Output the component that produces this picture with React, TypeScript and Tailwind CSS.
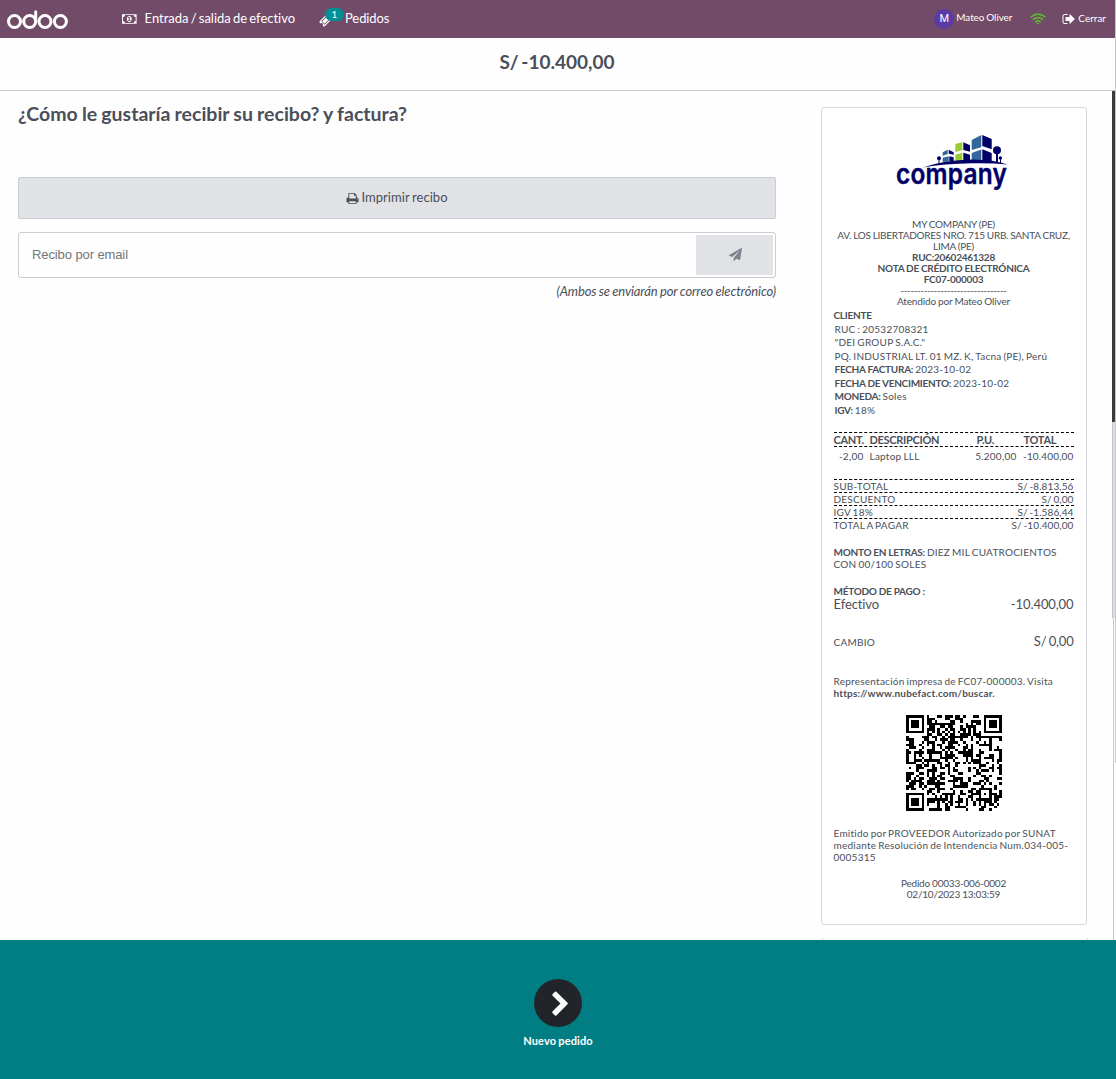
import React from "react";

const MONEY = "M768 1152h384v-96h-128v-448h-114l-148 137 77 80q42-37 55-57h2v288h-128v96zm512-256q0 70-21 142t-59.5 134-101.5 101-138 39-138-39-101.5-101-59.5-134-21-142 21-142 59.5-134 101.5-101 138-39 138 39 101.5 101 59.5 134 21 142zm512 256v-512q-106 0-181-75t-75-181h-1152q0 106-75 181t-181 75v512q106 0 181 75t75 181h1152q0-106 75-181t181-75zm128-832v1152q0 26-19 45t-45 19h-1792q-26 0-45-19t-19-45v-1152q0-26 19-45t45-19h1792q26 0 45 19t19 45z";
const TICKET = "M1024 452l316 316-572 572-316-316zm-211 979l618-618q19-19 19-45t-19-45l-362-362q-18-18-45-18t-45 18l-618 618q-19 19-19 45t19 45l362 362q18 18 45 18t45-18zm889-637l-907 908q-37 37-90.5 37t-90.5-37l-126-126q56-56 56-136t-56-136-136-56-136 56l-125-126q-37-37-37-90.5t37-90.5l907-906q37-37 90.5-37t90.5 37l125 125q-56 56-56 136t56 136 136 56 136-56l126 125q37 37 37 90.5t-37 90.5z";
const PRINT = "M448 1536h896v-256h-896v256zm0-640h896v-384h-160q-40 0-68-28t-28-68v-160h-640v640zm1152 64q0-26-19-45t-45-19-45 19-19 45 19 45 45 19 45-19 19-45zm128 0v416q0 13-9.5 22.5t-22.5 9.5h-224v160q0 40-28 68t-68 28h-960q-40 0-68-28t-28-68v-160h-224q-13 0-22.5-9.5t-9.5-22.5v-416q0-79 56.5-135.5t135.5-56.5h64v-544q0-40 28-68t68-28h672q40 0 88 20t76 48l152 152q28 28 48 76t20 88v256h64q79 0 135.5 56.5t56.5 135.5z";
const PLANE = "M1764 11q33 24 27 64l-256 1536q-5 29-32 45-14 8-31 8-11 0-24-5l-453-185-242 295q-18 23-49 23-13 0-22-4-19-7-30.5-23.5t-11.5-36.5v-349l864-1059-1069 925-395-162q-37-14-40-55-2-40 32-59l1664-960q15-9 32-9 20 0 36 11z";
const CHEVRON = "M1363 877l-742 742q-19 19-45 19t-45-19l-166-166q-19-19-19-45t19-45l531-531-531-531q-19-19-19-45t19-45l166-166q19-19 45-19t45 19l742 742q19 19 19 45t-19 45z";
const SIGN_OUT = "M704 1440q0 4 1 20t.5 26.5-3 23.5-10 19.5-20.5 6.5h-320q-119 0-203.5-84.5t-84.5-203.5v-704q0-119 84.5-203.5t203.5-84.5h320q13 0 22.5 9.5t9.5 22.5q0 4 1 20t.5 26.5-3 23.5-10 19.5-20.5 6.5h-320q-66 0-113 47t-47 113v704q0 66 47 113t113 47h312l11.5 1 11.5 3 8 5.5 7 9 2 13.5zm928-544q0 26-19 45l-544 544q-19 19-45 19t-45-19-19-45v-288h-448q-26 0-45-19t-19-45v-384q0-26 19-45t45-19h448v-288q0-26 19-45t45-19 45 19l544 544q19 19 19 45z";

function Icon({ d, className, box = "0 0 1792 1792" }: { d: string; className: string; box?: string }) {
  return (
    <svg viewBox={box} className={className} fill="currentColor">
      <path d={d} />
    </svg>
  );
}

function OdooLogo() {
  return (
    <svg width="63" height="22" viewBox="0 0 63 22" fill="none" stroke="#fff" strokeWidth="3">
      <circle cx="8.500" cy="13.5" r="6" />
      <circle cx="23.700" cy="13.5" r="6" />
      <path d="M29.700 13.5V3.700" strokeLinecap="round" />
      <circle cx="39" cy="13.5" r="6" />
      <circle cx="54.400" cy="13.5" r="6" />
    </svg>
  );
}

function CompanyLogo() {
  return (
    <svg width="120" height="60" viewBox="0 0 120 60" className="overflow-visible">
      <g fill="#336699">
        <path d="M77.700-1L87.300-6V6.300L77.700 9zM77.700 12L87.300 8.500V20H77.700z" />
        <path d="M48.700 11.300L53.700 8.700V13L48.700 14.700zM48.700 16.700L54.700 15.300V20.500L48.700 21z" />
      </g>
      <path d="M61.300 3L68.300 1.300V9.300L61.300 11zM61.300 13.700L68.300 11.700V19.500L61.300 20z" fill="#99cc33" />
      <g fill="#000066">
        <path d="M88.300-6L97.700-2V8.300L88.300 5zM88.300 8.300L97.700 12V20H88.300z" />
        <path d="M69.300 1.300L76 4.300V10.700L69.300 9zM69.300 11.700L76 13.700V20H69.300z" />
        <path d="M54.700 8.700L59.700 11.300V13.700L54.700 12.700zM55.300 15.300L59.700 16.300V20.300H55.300z" />
        <circle cx="103" cy="9.300" r="4" />
        <path d="M102 12h2v10h-2z" />
        <circle cx="106.400" cy="17" r="1.700" />
        <path d="M106 18h1v4h-1z" />
        <circle cx="45" cy="17.300" r="2" />
        <path d="M44.500 19h1v4h-1z" />
        <path d="M28.700 26.500Q50 19 78 18.500Q100 18.700 113.700 23.600Q98 21.900 78 22.300Q50 22.600 28.700 26.500z" />
      </g>
      <text x="2" y="43" className="font-['Inter'] font-semibold" fontSize="28" fill="#000066" stroke="#000066" strokeWidth="0.4" textLength="111" lengthAdjust="spacingAndGlyphs">company</text>
    </svg>
  );
}

const QR_SIZE = 37;

function finder(x: number, y: number, cx: number, cy: number, reach: number): boolean | null {
  const dist = Math.max(Math.abs(x - cx), Math.abs(y - cy));
  return dist > reach ? null : dist !== 2 && dist !== 4;
}

function qrPath(): string {
  let seed = 20602461;
  let d = "";
  for (let y = 0; y < QR_SIZE; y++) {
    for (let x = 0; x < QR_SIZE; x++) {
      seed = (Math.imul(seed, 1664525) + 1013904223) >>> 0;
      let dark = seed / 4294967296 < 0.5;
      if (y === 6) dark = x % 2 === 0;
      if (x === 6) dark = y % 2 === 0;
      const corner = finder(x, y, 3, 3, 4) ?? finder(x, y, 33, 3, 4) ?? finder(x, y, 3, 33, 4);
      const align = Math.max(Math.abs(x - 30), Math.abs(y - 30));
      if (corner !== null) dark = corner;
      else if (align <= 2) dark = align !== 1;
      if (dark) d += `M${x} ${y}h1v1h-1z`;
    }
  }
  return d;
}

const QR_PATH = qrPath();

function QrCode() {
  return (
    <svg width="96" height="96" viewBox="0 0 37 37" shapeRendering="crispEdges">
      <path d={QR_PATH} fill="#000" />
    </svg>
  );
}

function Line({ a, b }: { a: string; b: string }) {
  return (
    <div className="flex h-[13px] justify-between border-t border-dashed border-black leading-[12.5px]">
      <span>{a}</span>
      <span className="tracking-[0.1px]">{b}</span>
    </div>
  );
}

function Receipt() {
  return (
    <div className="h-[818px] w-[266px] shrink-0 rounded-[3px] border border-[#d6d8dc] bg-white pl-[11.5px] pr-[12.5px] text-[10px] tracking-[0.24px] [word-spacing:-0.8px] [&_b]:tracking-[-0.26px] [&_b]:[word-spacing:-0.1px]">
      <div className="flex h-[111px] justify-center pt-[33px]">
        <CompanyLogo />
      </div>
      <div className="text-center leading-[11px] tracking-[-0.24px] [word-spacing:-0.3px]">
        <div>MY COMPANY (PE)</div>
        <div className="whitespace-nowrap">AV. LOS LIBERTADORES NRO. 715 URB. SANTA CRUZ,</div>
        <div>LIMA (PE)</div>
        <div><b>RUC:20602461328</b></div>
        <div><b>NOTA DE CRÉDITO ELECTRÓNICA</b></div>
        <div><b>FC07-000003</b></div>
        <div className="tracking-[-0.4px]">--------------------------------</div>
        <div className="tracking-[-0.15px]">Atendido por Mateo Oliver</div>
      </div>
      <div className="mt-[2px] leading-[13.5px]">
        <div><b>CLIENTE</b></div>
        <div className="pl-px">
          <div>RUC : 20532708321</div>
          <div>"DEI GROUP S.A.C."</div>
          <div className="whitespace-nowrap">PQ. INDUSTRIAL LT. 01 MZ. K, Tacna (PE), Perú</div>
          <div><b>FECHA FACTURA:</b> 2023-10-02</div>
          <div><b>FECHA DE VENCIMIENTO:</b> 2023-10-02</div>
          <div><b>MONEDA:</b> Soles</div>
          <div><b>IGV:</b> 18%</div>
        </div>
      </div>
      <div className="mt-[15px] grid h-[15px] grid-cols-[36px_107px_47px_1fr] border-y border-dashed border-black text-[11px] font-bold leading-[14px] tracking-[-0.3px]">
        <span>CANT.</span><span>DESCRIPCIÓN</span><span>P.U.</span><span>TOTAL</span>
      </div>
      <div className="mt-[2px] flex h-[15px] leading-[15px]">
        <span className="w-[30px] text-right">-2,00</span>
        <span className="ml-[6px] grow">Laptop LLL</span>
        <span>5.200,00</span>
        <span className="w-[57px] text-right tracking-[0.15px]">-10.400,00</span>
      </div>
      <div className="mt-[15px]">
        <Line a="SUB-TOTAL" b="S/ -8.813,56" />
        <Line a="DESCUENTO" b="S/ 0,00" />
        <Line a="IGV 18%" b="S/ -1.586,44" />
        <Line a="TOTAL A PAGAR" b="S/ -10.400,00" />
      </div>
      <div className="mt-[15px] leading-[12px]">
        <b>MONTO EN LETRAS:</b> DIEZ MIL CUATROCIENTOS<br />CON 00/100 SOLES
      </div>
      <div className="mt-[15px] leading-[12px]"><b>MÉTODO DE PAGO :</b></div>
      <div className="flex justify-between text-[13px] leading-[14px] tracking-[-0.1px]"><span>Efectivo</span><span>-10.400,00</span></div>
      <div className="mt-[23px] flex items-baseline justify-between leading-[14px]"><span>CAMBIO</span><span className="text-[13px] tracking-[-0.2px]">S/ 0,00</span></div>
      <div className="mt-[26px] leading-[12px]">
        <div>Representación impresa de FC07-000003. Visita</div>
        <div className="font-bold tracking-[0.18px]">https://www.nubefact.com/buscar.</div>
      </div>
      <div className="mt-[16px] flex h-[96px] justify-center"><QrCode /></div>
      <div className="mt-[16px] whitespace-nowrap leading-[12px]">
        Emitido por PROVEEDOR Autorizado por SUNAT<br />mediante Resolución de Intendencia Num.034-005-<br />0005315
      </div>
      <div className="mt-[15px] text-center leading-[11px] tracking-[-0.22px] [word-spacing:-0.2px]">Pedido 00033-006-0002<br />02/10/2023 13:03:59</div>
    </div>
  );
}

export default function App() {
  return (
    <div className="flex h-[1079px] w-[1116px] flex-col overflow-hidden bg-[#fefefe] font-['Lato',sans-serif] text-[#4a4f59]">
      <div className="flex h-[940px] shrink-0">
        <div className="w-[1115px] shrink-0">
          <header className="flex h-[38px] items-center bg-[#714b67] text-white">
            <div className="ml-[6px] h-[22px] w-[63px] self-start pt-[8px]"><OdooLogo /></div>
            <div className="ml-[53px] flex w-[173px] items-center whitespace-nowrap text-[13px] [word-spacing:-1px]">
              <Icon d={MONEY} box="0 0 1920 1792" className="h-[14px] w-[15px]" />
              <span className="ml-[8px] tracking-[-0.03px]">Entrada / salida de efectivo</span>
            </div>
            <div className="relative ml-[24px] flex items-center text-[13px]">
              <Icon d={TICKET} className="mt-[2px] h-[13px] w-[13px]" />
              <span className="absolute left-[6px] top-[-1px] flex h-[13px] w-[19px] items-center justify-center rounded-full bg-[#018f96] text-[10px]">1</span>
              <span className="ml-[13px] tracking-[-0.1px]">Pedidos</span>
            </div>
            <div className="ml-auto mr-[9px] flex items-center text-[10px]">
              <span className="flex size-[20px] items-center justify-center rounded-full bg-[#5b3aa6] font-['Roboto'] text-[11px]">M</span>
              <span className="mb-[3px] ml-[2px] tracking-[-0.1px] [word-spacing:-0.500px]">Mateo Oliver</span>
              <svg className="ml-[18px] h-[12px] w-[16px]" viewBox="0 0 16 12" fill="none" stroke="#5cb531" strokeWidth="1.7">
                <path d="M.7 4.200Q8-2 15.300 4.200M3 6.700Q8 2.400 13 6.700M5.300 9.100Q8 6.700 10.700 9.100" />
                <path d="M6.500 10.300Q8 9 9.500 10.300L8 11.800z" fill="#5cb531" stroke="none" />
              </svg>
              <Icon d={SIGN_OUT} className="ml-[16px] h-[14px] w-[14px]" />
              <span className="mb-px ml-[2px]">Cerrar</span>
            </div>
          </header>
          <div className="flex h-[53px] items-center justify-center border-b border-[#c9ccd2] pb-[4px] pr-px text-[19px] font-bold [word-spacing:-2px]">S/ -10.400,00</div>
          <main className="flex h-[849px]">
            <section className="ml-[18px] w-[758px] shrink-0">
              <h1 className="mt-[11px] text-[19.5px] font-bold leading-[24px] [word-spacing:-0.6px]">¿Cómo le gustaría recibir su recibo? y factura?</h1>
              <button className="mt-[51px] flex h-[42px] w-full items-center justify-center rounded-[2px] border border-[#c9ccd2] bg-[#e0e2e6] text-[13px]">
                <Icon d={PRINT} className="mr-[2px] h-[13px] w-[13px]" /><span className="[word-spacing:-0.8px] tracking-[0.05px]">Imprimir recibo</span>
              </button>
              <div className="mt-[13px] flex h-[46px] rounded-[3px] border border-[#c9ccd2] p-[2px]">
                <div className="grow pl-[11px] font-['Liberation_Sans'] text-[13px] leading-[40px] tracking-[-0.1px] text-[#757575]">Recibo por email</div>
                <button className="flex h-[40px] w-[77px] items-center justify-center bg-[#e0e2e6] pb-px pl-px text-[#7f8391]"><Icon d={PLANE} className="h-[13px] w-[13px]" /></button>
              </div>
              <div className="mt-[4px] text-right text-[13px] italic leading-[18px] tracking-[-0.14px] [word-spacing:-0.5px]">(Ambos se enviarán por correo electrónico)</div>
            </section>
            <div className="ml-[45px] w-[266px] shrink-0 pt-[16px]">
              <Receipt />
              <div className="-mr-px ml-px mt-[13px] h-[2px] border-x border-[#d6d8dc]" />
            </div>
            <div className="ml-[25px] w-[3px] shrink-0">
              <div className="h-[331px] bg-[#3a3a3a]" />
              <div className="h-[196px] border-l border-[#c2c3c6] bg-[#dedfe4]" />
              <div className="ml-px h-[322px] w-px bg-[#c6c7ca]" />
            </div>
          </main>
        </div>
        <div className="h-[763px] w-px bg-[#c6c7ca]" />
      </div>
      <footer className="flex grow flex-col items-center bg-[#017e84] pt-[39px]">
        <div className="flex size-[48px] items-center justify-center rounded-full bg-[#212529] text-white">
          <Icon d={CHEVRON} className="ml-[4px] mt-[2px] size-[27px]" />
        </div>
        <div className="mt-[6px] text-[11px] font-bold leading-[16px] tracking-[0.1px] text-white [word-spacing:-0.5px]">Nuevo pedido</div>
      </footer>
    </div>
  );
}
